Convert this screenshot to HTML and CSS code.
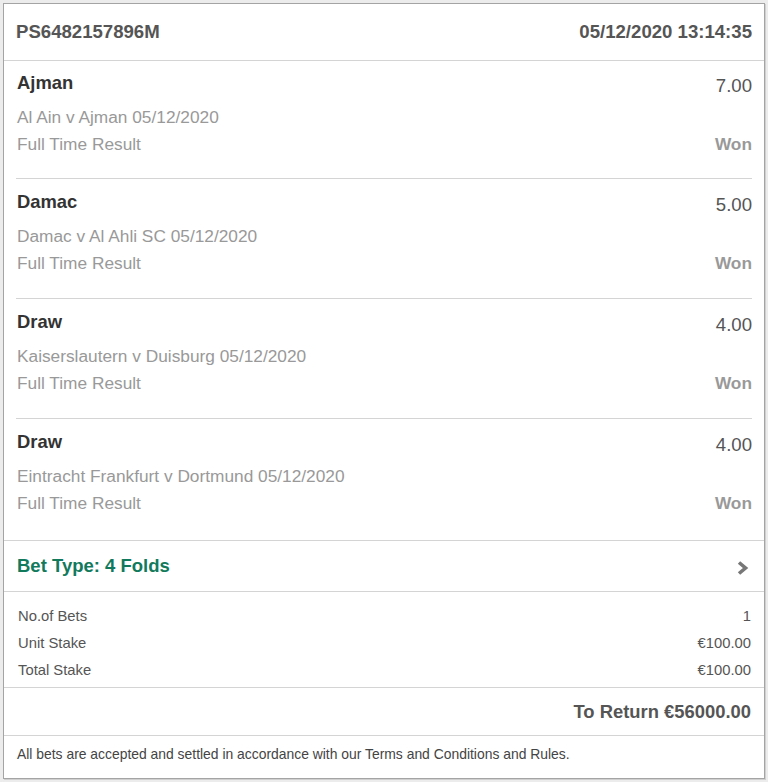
FILE: index.html
```html
<!DOCTYPE html>
<html lang="en">
<head>
<meta charset="utf-8">
<title>Bet Receipt</title>
<link rel="stylesheet" href="styles.css">
</head>
<body>
<div class="card">
  <div class="header">
    <span>PS6482157896M</span>
    <span>05/12/2020 13:14:35</span>
  </div>

  <div class="selections">
    <div class="sel">
      <div class="sel-top"><span class="sel-name">Ajman</span><span class="odds">7.00</span></div>
      <div class="sel-event">Al Ain v Ajman 05/12/2020</div>
      <div class="sel-market"><span>Full Time Result</span><span class="won">Won</span></div>
    </div>
    <div class="sel">
      <div class="sel-top"><span class="sel-name">Damac</span><span class="odds">5.00</span></div>
      <div class="sel-event">Damac v Al Ahli SC 05/12/2020</div>
      <div class="sel-market"><span>Full Time Result</span><span class="won">Won</span></div>
    </div>
    <div class="sel">
      <div class="sel-top"><span class="sel-name">Draw</span><span class="odds">4.00</span></div>
      <div class="sel-event">Kaiserslautern v Duisburg 05/12/2020</div>
      <div class="sel-market"><span>Full Time Result</span><span class="won">Won</span></div>
    </div>
    <div class="sel">
      <div class="sel-top"><span class="sel-name">Draw</span><span class="odds">4.00</span></div>
      <div class="sel-event">Eintracht Frankfurt v Dortmund 05/12/2020</div>
      <div class="sel-market"><span>Full Time Result</span><span class="won">Won</span></div>
    </div>
  </div>

  <div class="bettype">
    <span>Bet Type: 4 Folds</span>
    <svg class="chev" width="14" height="14" viewBox="0 0 14 14" aria-hidden="true">
      <polyline points="3,1.5 9.5,7 3,12.5" fill="none" stroke="#777" stroke-width="3.6" stroke-linejoin="miter"/>
    </svg>
  </div>

  <div class="stakes">
    <div class="stake-row"><span>No.of Bets</span><span>1</span></div>
    <div class="stake-row"><span>Unit Stake</span><span>€100.00</span></div>
    <div class="stake-row"><span>Total Stake</span><span>€100.00</span></div>
  </div>

  <div class="return">To Return €56000.00</div>

  <div class="footer">All bets are accepted and settled in accordance with our Terms and Conditions and Rules.</div>
</div>
</body>
</html>
```

FILE: styles.css
```css
html, body {
  margin: 0;
  padding: 0;
}
body {
  background: #ececec;
  font-family: "Liberation Sans", Arial, sans-serif;
  padding: 3px;
  height: 782px;
  box-sizing: border-box;
}
.card {
  background: #fff;
  border: 1px solid #a4a4a4;
  box-shadow: 1px 1px 0 #d0d0d0;
  height: 776px;
  box-sizing: border-box;
  display: flex;
  flex-direction: column;
}
.header {
  height: 57px;
  box-sizing: border-box;
  border-bottom: 1px solid #d4d4d4;
  display: flex;
  align-items: center;
  justify-content: space-between;
  padding: 0 12px 1px 12px;
  font-weight: bold;
  font-size: 18.6px;
  color: #555;
}
.selections {
  padding: 0 12px 0 12px;
  border-bottom: 1px solid #d4d4d4;
}
.sel {
  height: 120px;
  box-sizing: border-box;
  padding: 11px 0 0 1px;
  border-bottom: 1px solid #d4d4d4;
}
.sel:first-child {
  height: 118px;
  padding-top: 10px;
}
.sel:last-child {
  border-bottom: none;
  height: 121px;
}
.sel-top {
  display: flex;
  justify-content: space-between;
  align-items: flex-start;
  line-height: 24px;
}
.sel-name {
  font-weight: bold;
  font-size: 18.4px;
  color: #333;
}
.odds {
  font-size: 18.6px;
  color: #555;
  padding-top: 3px;
}
.sel-event {
  margin-top: 6px;
  font-size: 17.3px;
  line-height: 27px;
  color: #999;
}
.sel-market {
  display: flex;
  justify-content: space-between;
  font-size: 17.3px;
  line-height: 27px;
  color: #999;
}
.won {
  font-weight: bold;
}
.bettype {
  height: 51px;
  box-sizing: border-box;
  border-bottom: 1px solid #d4d4d4;
  display: flex;
  align-items: center;
  justify-content: space-between;
  padding: 0 14px 0 13px;
  font-weight: bold;
  font-size: 18.5px;
  color: #127a5c;
}
.chev {
  margin-top: 4px;
}
.stakes {
  padding: 11px 13px 3px 14px;
  border-bottom: 1px solid #d4d4d4;
}
.stake-row {
  display: flex;
  justify-content: space-between;
  font-size: 14.8px;
  line-height: 27px;
  color: #555;
}
.return {
  height: 48px;
  box-sizing: border-box;
  border-bottom: 1px solid #d4d4d4;
  display: flex;
  align-items: center;
  justify-content: flex-end;
  padding: 0 13px;
  font-weight: bold;
  font-size: 18.4px;
  color: #555;
}
.footer {
  padding: 9px 13px 0 13px;
  font-size: 13.9px;
  line-height: 18px;
  color: #444;
}
```
